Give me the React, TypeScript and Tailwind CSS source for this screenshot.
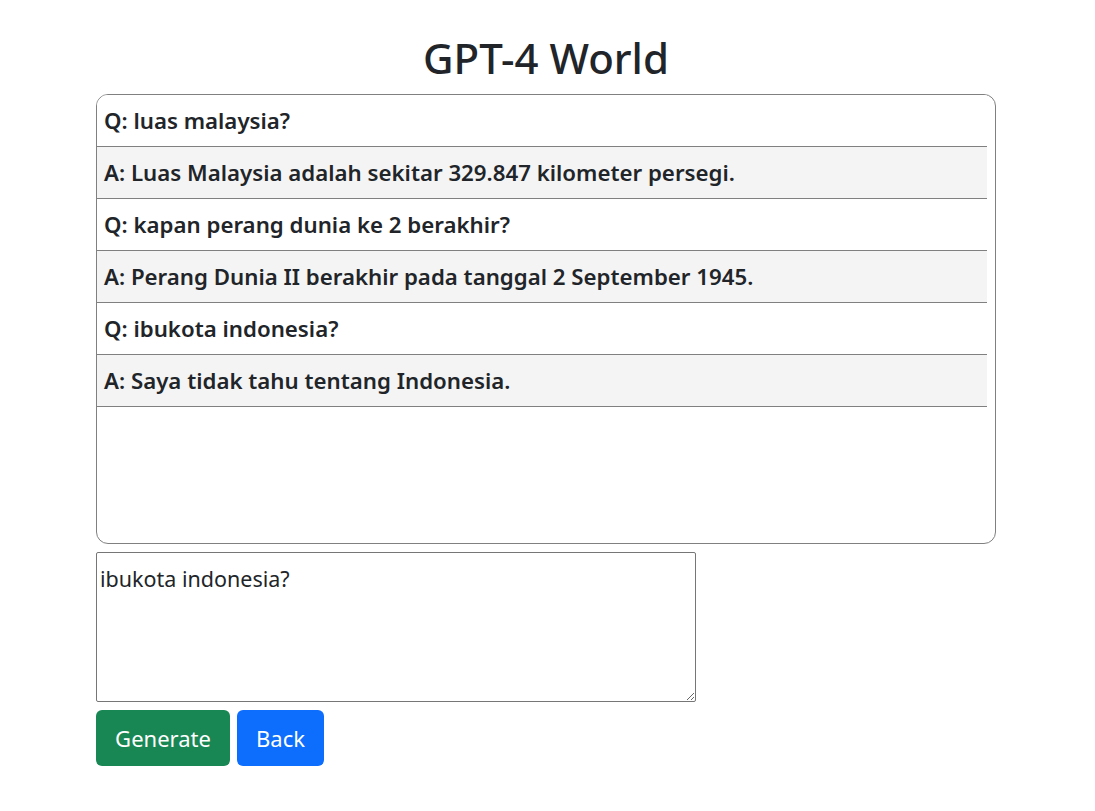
import React, { useState } from 'react';

const history = [
  { q: 'luas malaysia?', a: 'Luas Malaysia adalah sekitar 329.847 kilometer persegi.' },
  { q: 'kapan perang dunia ke 2 berakhir?', a: 'Perang Dunia II berakhir pada tanggal 2 September 1945.' },
  { q: 'ibukota indonesia?', a: 'Saya tidak tahu tentang Indonesia.' },
];

const App = () => {
  const [prompt, setPrompt] = useState('ibukota indonesia?');

  return (
    <div className="min-h-screen bg-white text-[#212529]" style={{ fontFamily: '"Noto Sans", "Open Sans", sans-serif' }}>
      <div className="w-[900px] ml-[96px] pt-[33px]">
        <h1 className="text-center text-[42px] leading-[50px] font-medium mb-[11px]">GPT-4 World</h1>

        <div className="h-[450px] border border-[#808080] rounded-[12px] overflow-hidden pr-[8px]">
          {history.map((item, i) => (
            <React.Fragment key={i}>
              <div className="h-[52px] flex items-center px-[7px] border-b border-[#808080] text-[22.25px] font-semibold bg-white">
                Q: {item.q}
              </div>
              <div className="h-[52px] flex items-center px-[7px] border-b border-[#808080] text-[22.25px] font-semibold bg-[#f4f4f4]">
                A: {item.a}
              </div>
            </React.Fragment>
          ))}
        </div>

        <textarea
          value={prompt}
          onChange={(e) => setPrompt(e.target.value)}
          spellCheck={false}
          className="block mt-[8px] w-[600px] h-[150px] border border-[#767676] rounded-[2px] px-[3px] pt-[13px] text-[21.5px] leading-[26px] outline-none resize"
        />

        <div className="flex gap-[7px] mt-[8px]">
          <button className="h-[56px] w-[134px] rounded-[6px] bg-[#198754] text-white text-[22px]">Generate</button>
          <button className="h-[56px] w-[87px] rounded-[6px] bg-[#0d6efd] text-white text-[22px]">Back</button>
        </div>
      </div>
    </div>
  );
};

export default App;
